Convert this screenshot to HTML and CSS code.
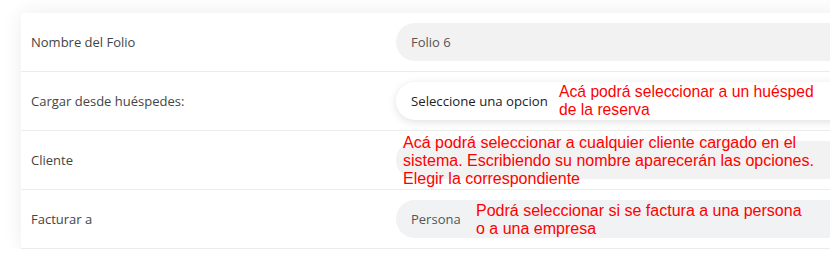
FILE: index.html
```html
<!DOCTYPE html>
<html lang="es">
<head>
  <meta charset="UTF-8">
  <meta name="viewport" content="width=device-width, initial-scale=1.0">
  <title>Folio</title>
  <link rel="stylesheet" href="styles.css">
</head>
<body>
  <div class="card">
    <div class="row">
      <div class="label">Nombre del Folio</div>
      <div class="field">
        <div class="input">Folio 6</div>
      </div>
    </div>

    <div class="row">
      <div class="label">Cargar desde huéspedes:</div>
      <div class="field">
        <div class="input select">Seleccione una opcion</div>
        <div class="note note-guest">Acá podrá seleccionar a un huésped<br>de la reserva</div>
      </div>
    </div>

    <div class="row">
      <div class="label">Cliente</div>
      <div class="field">
        <div class="input"></div>
        <div class="note note-client">Acá podrá seleccionar a cualquier cliente cargado en el<br>sistema. Escribiendo su nombre aparecerán las opciones.<br>Elegir la correspondiente</div>
      </div>
    </div>

    <div class="row">
      <div class="label">Facturar a</div>
      <div class="field">
        <div class="input small">Persona</div>
        <div class="note note-bill">Podrá seleccionar si se factura a una persona<br>o a una empresa</div>
      </div>
    </div>
  </div>
</body>
</html>
```

FILE: styles.css
```css
* {
  box-sizing: border-box;
  margin: 0;
  padding: 0;
}

body {
  background-color: #fff;
  font-family: 'Open Sans', 'Noto Sans', sans-serif;
  overflow: hidden;
  padding: 13px 0 0 21px;
}

.card {
  background-color: #fff;
  border-radius: 4px;
  box-shadow: 0 0 20px rgba(0, 0, 0, 0.08);
  width: 880px;
}

.row {
  display: grid;
  grid-template-columns: 375px 1fr;
  align-items: center;
  padding: 10px 0;
  border-bottom: 1px solid #ececec;
}

.label {
  padding-left: 10px;
  font-size: 13px;
  color: #444;
}

.field {
  position: relative;
}

.input {
  height: 38px;
  border-radius: 19px;
  background-color: #f2f2f2;
  padding-left: 15px;
  display: flex;
  align-items: center;
  font-size: 13px;
  color: #555;
}

.select {
  background-color: #fff;
  color: #222;
  font-size: 13.2px;
  box-shadow: 0 2px 8px rgba(0, 0, 0, 0.12);
}

.small {
  background-color: #f1f2f3;
}

.note {
  position: absolute;
  font-family: 'Liberation Sans', Arial, sans-serif;
  font-size: 16px;
  line-height: 18px;
  color: #ff0000;
  white-space: nowrap;
}

.note-guest {
  left: 163px;
  top: 1px;
  font-size: 15.7px;
}

.note-client {
  left: 7px;
  top: -7px;
}

.note-bill {
  left: 80px;
  top: 2px;
}
```
